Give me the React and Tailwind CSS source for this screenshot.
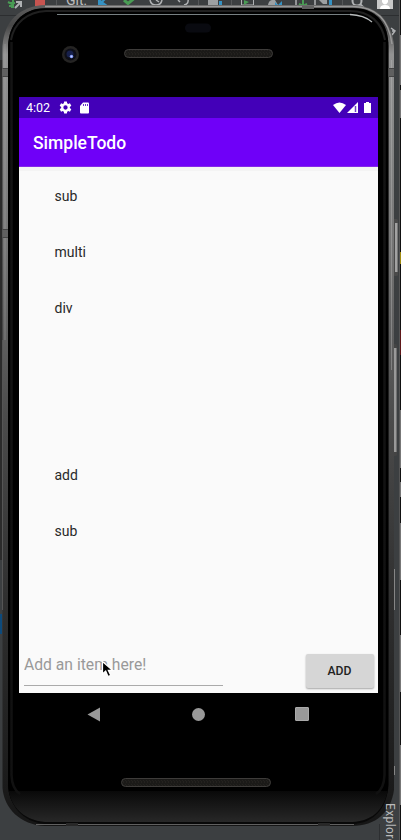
import React from "react";

const items = ["sub", "multi", "div", "", "", "add", "sub", ""];

function Workspace() {
  return (
    <svg className="absolute inset-0" width="401" height="840" viewBox="0 0 401 840" aria-hidden="true">
      <rect width="401" height="840" fill="#3c3f41" />
      <path d="M0 15.500H401" stroke="#2c2e30" />
      <rect x="0" y="60" width="3" height="500" fill="#2b2b2b" />
      <rect x="0" y="614" width="2" height="20" fill="#0d4a7c" />
      <g fill="none" stroke="#499c54" strokeWidth="2">
        <path d="M8 2l4 2v4M10 3h5M9 6h5M13 0v8" />
        <path d="M124 0l4 3.500l6-5" strokeWidth="3" />
        <path d="M299 4l4 2l4-2M303 0v5" />
      </g>
      <path d="M15 8l6-6M16 2h5v5" stroke="#afb1b3" strokeWidth="2" fill="none" />
      <rect x="35" y="0" width="10" height="6" fill="#c75450" />
      <path d="M56.500 0v8M231.500 0v8M342.500 0v8M198.500 0v8" stroke="#555759" />
      <path d="M99 0v6h8zM101 3l5-5" fill="#3592c4" stroke="#3592c4" strokeWidth="2" />
      <g fill="none" stroke="#afb1b3" strokeWidth="2">
        <path d="M150 0q1 5 6 5t6-5M156 0l3 2M184 5q5-1 4-6M178 0l2 2M296 0v5M315 0v5" strokeWidth="1.500" />
        <circle cx="357" cy="1" r="4.500" />
        <path d="M360 4l4 4" />
      </g>
      <path d="M208 0h10v5h-10zM268 5q1-6 7-5l3 5zM319 0h8v4h-4z" fill="#9da0a2" />
      <path d="M219 1h3v4h-3zM275 2l3 3l4-4v4h-7zM329 0h3v5h-3z" fill="#3592c4" />
      <path d="M241.500 0v5h12V0" fill="none" stroke="#afb1b3" />
      <path d="M244 0l5 2l-5 3z" fill="#499c54" />
      <rect x="377" y="0" width="16" height="9" fill="#c8c8c8" />
      <path d="M380 9q0-4 5-4t5 4zM382 0h6v2q-3 5-6 0z" fill="#fff" />
      <path d="M391 28l4 3l-3 4M392 31h3" stroke="#afb1b3" fill="none" strokeWidth="1.500" />
      <rect x="399" y="0" width="2" height="840" fill="#111" />
      <path d="M400.500 35v50M400.500 90v28M400.500 410v58M400.500 482v15M400.500 523v57M400.500 635v57M400.500 745v60" stroke="#777" />
      <path d="M399.500 0v840" stroke="#555" />
      <rect x="400" y="252" width="1" height="12" fill="#a18b10" />
      <rect x="400" y="330" width="1" height="25" fill="#5f1719" />
      <path d="M379.500 824V840" stroke="#2d2f31" />
    </svg>
  );
}

function Device() {
  return (
    <svg className="absolute inset-0" width="401" height="840" viewBox="0 0 401 840" aria-hidden="true">
      <defs>
        <linearGradient id="rim" x1="0" y1="0" x2="0" y2="1">
          <stop offset="0" stopColor="#5d5d5d" />
          <stop offset=".025" stopColor="#484848" />
          <stop offset=".06" stopColor="#929292" />
          <stop offset=".28" stopColor="#777" />
          <stop offset=".5" stopColor="#4c4c4c" />
          <stop offset=".72" stopColor="#303030" />
          <stop offset="1" stopColor="#161616" />
        </linearGradient>
        <linearGradient id="chin" x1="0" y1="0" x2="0" y2="1">
          <stop offset="0" stopColor="#090909" />
          <stop offset=".25" stopColor="#111" />
          <stop offset=".8" stopColor="#222" />
          <stop offset="1" stopColor="#292929" />
        </linearGradient>
        <linearGradient id="side" gradientUnits="userSpaceOnUse" x1="0" y1="42" x2="0" y2="794">
          <stop offset="0" stopColor="#141414" />
          <stop offset="1" stopColor="#111" />
        </linearGradient>
        <clipPath id="face">
          <path d="M45 8H354C378 9 388 25 388.500 46V785C386 808 374 821 352 822H45C22 820 9 805 8 785V46C9 25 21 9 45 8Z" />
        </clipPath>
        <pattern id="mesh" width="3" height="4" patternUnits="userSpaceOnUse">
          <rect width="3" height="4" fill="#1b1a18" />
          <path d="M0 2h1M2 0h1" stroke="#2c2925" />
        </pattern>
      </defs>
      <rect x="393" y="219" width="5" height="57" rx="1.500" fill="#4a4a4a" />
      <rect x="395" y="223" width="2.500" height="49" fill="#a2a2a2" />
      <rect x="392" y="344" width="5" height="112" rx="1.500" fill="#444" />
      <rect x="394" y="348" width="2.500" height="104" fill="#999" />
      <path d="M394.500 569v41M394.500 766v9" stroke="#858585" />
      <path d="M45 5H353C378 6 392 21 394 46V790C391 812 376 826 352 826H45C20 825 4 808 2.500 788V46C4 21 20 6 45 5Z" fill="url(#rim)" />
      <path d="M45 6.500H353C376 7 389 20 392 44" fill="none" stroke="#999" strokeWidth="1.500" />
      <path d="M45 8H354C378 9 388 25 388.500 46V785C387 808 374 823.500 352 824H45C22 822 9 805 8 785V46C9 25 21 9 45 8Z" fill="#090909" />
      <path d="M5 44V340" stroke="#aaa" strokeOpacity=".45" />
      <path d="M2.500 340V610" stroke="#555" />
      <path d="M391.500 60V370" stroke="#bbb" strokeOpacity=".4" />
      <g clipPath="url(#face)">
        <rect x="8" y="9" width="380.500" height="815" fill="#000" />
        <rect x="8" y="791" width="381" height="32" fill="url(#chin)" />
        <path d="M11.500 42V775Q12 789 20 794M384.500 42V775Q384 789 376 794" fill="none" stroke="url(#side)" strokeWidth="2.500" />
      </g>
      <path d="M11 40C14 23 27 12 46 11H350C370 11 382 23 385 40" fill="none" stroke="#202020" strokeWidth="2" />
      <path d="M57 14.500H352" stroke="#778083" />
      <path d="M350 14.500Q364 15 372 22" fill="none" stroke="#b8bcbd" strokeWidth="1.300" />
      <path d="M36 824.500H354" stroke="#606060" />
      <path d="M66 824.500H78M318 824.500H330" stroke="#282828" strokeWidth="3" />
      <path d="M2.500 68H8V76H2.500zM2.500 229H8V238H2.500zM388.500 68H394V77H388.500zM302 6h12v3h-12z" fill="#606060" />
      <path d="M2.500 68.500H8M2.500 76.500H8M2.500 229.500H8M2.500 237.500H8M388.500 68.500h5.500M388.500 76.500h5.500" stroke="#444" />
      <rect x="185" y="23.500" width="26" height="9" rx="4.500" fill="#090a10" />
      <circle cx="70.500" cy="54.500" r="8.500" fill="#252423" />
      <circle cx="70.500" cy="54.500" r="6" fill="#0d0e17" />
      <circle cx="70" cy="54" r="3.500" fill="#17204b" />
      <circle cx="71.500" cy="56.500" r="1.800" fill="#718af0" />
      <circle cx="71.500" cy="56.500" r="1" fill="#c7d2ff" />
      <rect x="124.500" y="49.500" width="148" height="8" rx="4" fill="url(#mesh)" stroke="#3e3c3a" />
      <rect x="121.500" y="778.500" width="149" height="8" rx="4" fill="url(#mesh)" stroke="#3e3c3a" />
    </svg>
  );
}

function StatusBar() {
  return (
    <div className="flex h-[21px] items-center bg-[#4300b8] pl-[7px] pr-[6px] text-white">
      <span className="w-[33px] text-[12.500px] leading-[21px]">4:02</span>
      <svg width="13" height="13" viewBox="0 0 24 24" fill="#fff">
        <path fillRule="evenodd" d="M9.500 1h5l.6 3.300 2 1.100 3.100-1.100 2.500 4.300L20 11v2l2.700 2.400-2.500 4.300-3.100-1.100-2 1.100-.6 3.300h-5l-.6-3.300-2-1.100-3.100 1.100-2.500-4.300L4 13v-2L1.300 8.600l2.500-4.300 3.100 1.100 2-1.100zM12 8a4 4 0 100 8 4 4 0 000-8z" />
      </svg>
      <svg className="ml-[7px]" width="11" height="12" viewBox="0 0 11 12">
        <path d="M4 .5h5q1 0 1 1v9q0 1-1 1H2q-1 0-1-1V4z" fill="#fff" />
        <path d="M4.500 2v2M6.500 2v2M8.500 2v2" stroke="#6a36ca" />
      </svg>
      <svg className="ml-auto" width="39" height="13" viewBox="0 0 39 13" fill="#fff">
        <path d="M0 4Q6.500-1 13 4L6.500 12Z" />
        <path d="M14 12L25 1V12Z" />
        <path d="M22.500 5v6" stroke="#7040c9" strokeWidth="1.500" />
        <path d="M31 2h2V1h3v1h2v10h-7z" />
      </svg>
    </div>
  );
}

function NavigationBar() {
  return (
    <div className="flex h-[42px] items-center justify-between pl-[68px] pr-[69px]">
      <svg width="14" height="15" viewBox="0 0 14 15"><path d="M.5 7.500L13 .5v14z" fill="#999" /></svg>
      <div className="size-[13px] rounded-full bg-[#999]" />
      <div className="size-[14px] rounded-[1px] border border-[#aaa] bg-[#999]" />
    </div>
  );
}

export default function App() {
  return (
    <div className="relative h-[840px] w-[401px] overflow-hidden font-['Roboto',sans-serif]">
      <Workspace />
      <span className="absolute left-[66px] top-[-8px] text-[14px] leading-[16px] text-[#bbb]">Git:</span>
      <Device />
      <span className="absolute left-[383px] top-[803px] text-[12px] leading-[14px] tracking-[0.4px] text-[#bbb] [writing-mode:vertical-rl]">Explorer</span>
      <main className="relative pl-[19px] pt-[97px]">
        <div className="w-[359px]">
          <section className="flex h-[596px] flex-col bg-[#fafafa]">
            <StatusBar />
            <header className="flex h-[49px] items-center border-b border-[#8428e8] bg-[#6f00f8] pl-[14px] pt-[3px]">
              <h1 className="text-[17.500px] font-medium leading-none text-white">SimpleTodo</h1>
            </header>
            <div className="h-1 shrink-0 bg-[#f4f4f4]" />
            <ul className="-mt-[2px] min-h-0 flex-1 overflow-hidden">
              {items.map((item, index) => (
                <li key={index} className="flex h-[55.800px] items-center pl-[35.500px] text-[14px] text-[#292929]">{item}</li>
              ))}
            </ul>
            <form className="flex h-[43px] shrink-0 justify-between pl-[5px] pr-1">
              <input
                className="h-[36px] w-[199px] border-b border-[#aaa] bg-transparent pb-[7px] text-[15.700px] outline-none placeholder:text-[#999]"
                placeholder="Add an item here!"
                aria-label="Add an item"
              />
              <button type="button" className="mt-1 h-[34px] w-[68px] rounded-[2px] bg-[#d6d6d6] pr-[1px] text-[12.200px] font-medium text-[#222] shadow-[0_1px_2px_rgba(0,0,0,0.35)]">ADD</button>
            </form>
          </section>
          <NavigationBar />
        </div>
      </main>
      <svg className="absolute left-[101px] top-[660px]" width="13" height="18" viewBox="0 0 13 18">
        <path d="M1.500 1.500V14L4.700 11L7 16.500L9.700 15.300L7.300 10.300H11.500Z" fill="#000" stroke="#fff" strokeWidth="1.200" />
      </svg>
    </div>
  );
}
